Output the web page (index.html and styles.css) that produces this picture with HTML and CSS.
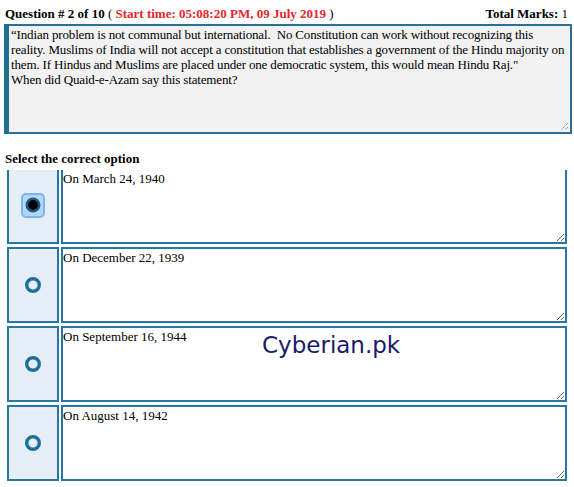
FILE: index.html
```html
<!DOCTYPE html>
<html>
<head>
    <title>Quiz</title>
    <meta charset="utf-8">
    <link rel="stylesheet" href="styles.css">
</head>
<body>
    <div class="quiz">
        <!-- Header -->
        <div class="quiz-head">
            <div><b>Question # 2 of 10</b> ( <b class="start-time">Start time: 05:08:20 PM, 09 July 2019</b> )</div>
            <div><b>Total Marks:</b> 1</div>
        </div>

        <!-- Question text -->
        <div class="question-box">“Indian problem is not communal but international.  No Constitution can work without recognizing this
reality. Muslims of India will not accept a constitution that establishes a government of the Hindu majority on
them. If Hindus and Muslims are placed under one democratic system, this would mean Hindu Raj."
When did Quaid-e-Azam say this statement?<svg class="grip" width="9" height="9" viewBox="0 0 9 9"><path d="M8 1L1 8M8 5L5 8" stroke="#666" stroke-width="1" stroke-dasharray="1 1"/></svg></div>

        <p class="select-label">Select the correct option</p>

        <!-- Options -->
        <div class="options-wrap">
            <div class="options">
                <div class="option-row">
                    <div class="option-radio">
                        <span class="radio-focus">
                            <svg width="16" height="16" viewBox="0 0 16 16"><circle cx="8" cy="8" r="6.2" fill="#000" stroke="#1b5e85" stroke-width="2.6"/></svg>
                        </span>
                    </div>
                    <textarea class="option-text" readonly>On March 24, 1940</textarea>
                </div>
                <div class="option-row">
                    <div class="option-radio">
                        <svg width="18" height="18" viewBox="0 0 18 18"><circle cx="9" cy="9" r="6.3" fill="none" stroke="#1f7099" stroke-width="3.4"/></svg>
                    </div>
                    <textarea class="option-text" readonly>On December 22, 1939</textarea>
                </div>
                <div class="option-row">
                    <div class="option-radio">
                        <svg width="18" height="18" viewBox="0 0 18 18"><circle cx="9" cy="9" r="6.3" fill="none" stroke="#1f7099" stroke-width="3.4"/></svg>
                    </div>
                    <textarea class="option-text" readonly>On September 16, 1944</textarea>
                </div>
                <div class="option-row">
                    <div class="option-radio">
                        <svg width="18" height="18" viewBox="0 0 18 18"><circle cx="9" cy="9" r="6.3" fill="none" stroke="#1f7099" stroke-width="3.4"/></svg>
                    </div>
                    <textarea class="option-text" readonly>On August 14, 1942</textarea>
                </div>
            </div>
            <div class="watermark">Cyberian.pk</div>
        </div>
    </div>
</body>
</html>
```
FILE: styles.css
```css
body {
    margin: 0;
    font-family: "Liberation Serif", "Times New Roman", serif;
    font-size: 13px;
    color: #000;
    background: #fff;
}
.quiz {
    padding: 6px 6px 0 4px;
}
/* Header line */
.quiz-head {
    display: flex;
    justify-content: space-between;
    font-size: 13px;
    line-height: 15px;
    padding: 0 0 0 1px;
    height: 18px;
}
.start-time {
    color: #e8262b;
}
/* Question text box (lines broken as in the original) */
.question-box {
    position: relative;
    box-sizing: border-box;
    width: 568px;
    height: 110px;
    padding: 1px 0 1px 2px;
    border: 2px solid #2a6f96;
    border-left: 5px solid #226f96;
    background: #f2f2f2;
    font-size: 13px;
    line-height: 15px;
    letter-spacing: -0.16px;
    white-space: pre;
    overflow: hidden;
}
.grip {
    position: absolute;
    right: 1px;
    bottom: 1px;
}
.select-label {
    margin: 0;
    padding: 17px 0 0 1px;
    height: 19px;
    font-weight: bold;
    font-size: 13px;
    line-height: 15px;
}
/* Option list, scrolled so the first row is cut at the top */
.options-wrap {
    position: relative;
    height: 317px;
    overflow: hidden;
}
.options {
    display: flex;
    flex-direction: column;
    gap: 3px;
    margin: -2px 0 0 3px;
}
.option-row {
    display: grid;
    grid-template-columns: 52px 506px;
    gap: 2px;
    height: 76px;
}
.option-radio {
    box-sizing: border-box;
    border: 2px solid #2677a3;
    background: #e5edf7;
    display: flex;
    align-items: center;
    justify-content: center;
    padding-right: 1px;
}
.radio-focus {
    display: flex;
    align-items: center;
    justify-content: center;
    width: 20px;
    height: 21px;
    border: 2px solid #7bb7ee;
    border-radius: 5px;
    background: #b5d7f6;
    margin-top: -2px;
}
.option-text {
    box-sizing: border-box;
    width: 100%;
    height: 76px;
    margin: 0;
    padding: 1px 1px 1px 0;
    border: 2px solid #2677a3;
    background: #fff;
    font-family: "Liberation Serif", "Times New Roman", serif;
    font-size: 13px;
    line-height: 15px;
    color: #000;
    resize: vertical;
    overflow: hidden;
    outline: none;
}
/* Site watermark over the options */
.watermark {
    position: absolute;
    left: 258px;
    top: 162px;
    font-family: "DejaVu Sans", Verdana, sans-serif;
    font-size: 23px;
    color: #1a1c6b;
    pointer-events: none;
}
```
